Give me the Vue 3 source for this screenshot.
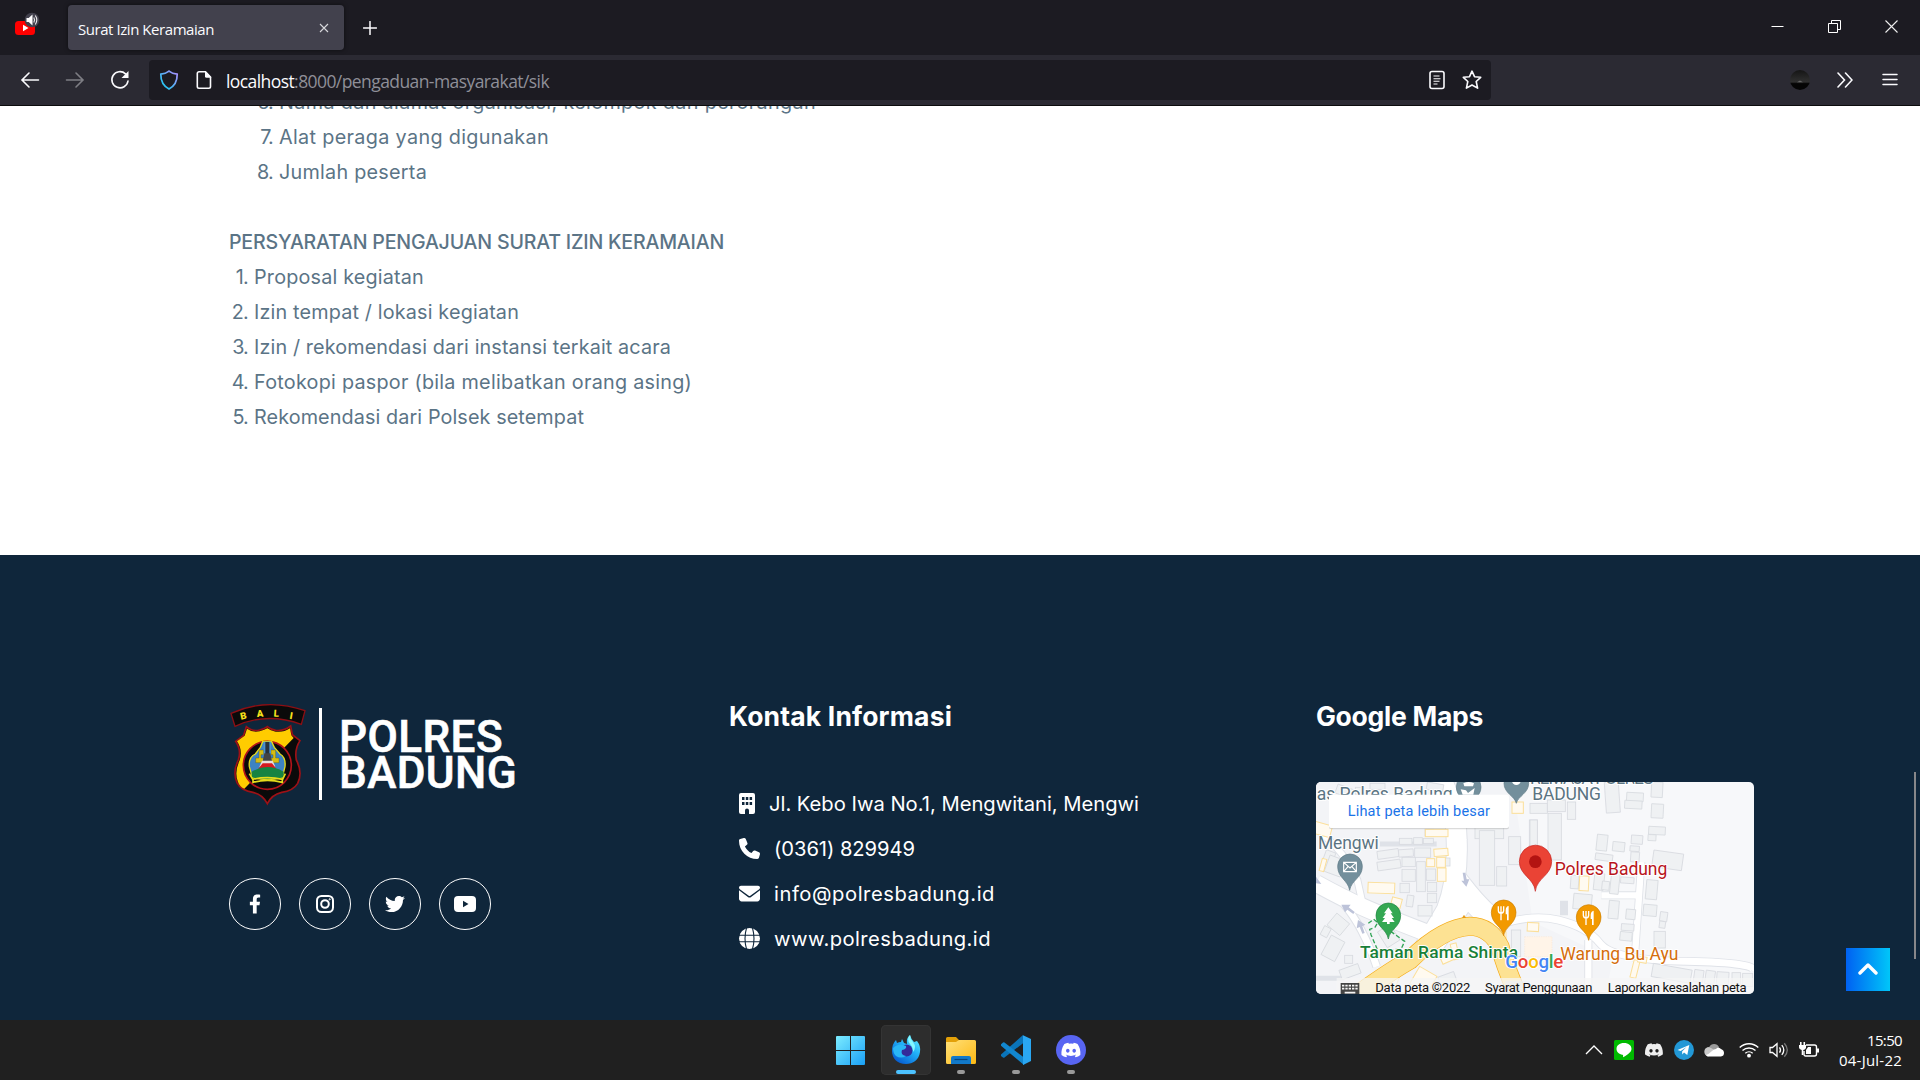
<script setup>
// Spreads the letters of a label evenly so that it takes the given width in pixels.
const vFit = {
  mounted(el, { value }) {
    const natural = el.getBoundingClientRect().width
    const count = el.textContent.length
    el.style.letterSpacing = (value - natural) / count + 'px'
  }
}

const outerItems = [
  { n: 6, text: 'Nama dan alamat organisasi, kelompok dan perorangan', w: 537 },
  { n: 7, text: 'Alat peraga yang digunakan', w: 270 },
  { n: 8, text: 'Jumlah peserta', w: 148 }
]
const innerItems = [
  { n: 1, text: 'Proposal kegiatan', w: 170 },
  { n: 2, text: 'Izin tempat / lokasi kegiatan', w: 265 },
  { n: 3, text: 'Izin / rekomendasi dari instansi terkait acara', w: 417 },
  { n: 4, text: 'Fotokopi paspor (bila melibatkan orang asing)', w: 438 },
  { n: 5, text: 'Rekomendasi dari Polsek setempat', w: 330 }
]

const discordPath = 'M20.3 4.4A19.8 19.8 0 0 0 15.4 2.9c-.2.4-.5.9-.6 1.3a18.300 18.300 0 0 0-5.500 0c-.2-.4-.4-.9-.6-1.300A19.700 19.700 0 0 0 3.700 4.400C.5 9-.3 13.600.1 18.100a19.900 19.900 0 0 0 6 3c.5-.6.9-1.300 1.200-2a13 13 0 0 1-1.900-.9l.4-.3a14.200 14.200 0 0 0 12.200 0l.4.3c-.6.4-1.200.7-1.900.9.4.7.8 1.400 1.200 2a19.800 19.800 0 0 0 6-3c.5-5.200-.8-9.700-3.500-13.700zM8 15.300c-1.200 0-2.200-1.100-2.200-2.400s1-2.400 2.200-2.400 2.200 1.100 2.200 2.400-1 2.400-2.200 2.400zm8 0c-1.200 0-2.200-1.100-2.200-2.400s1-2.400 2.200-2.400 2.200 1.100 2.200 2.400-1 2.400-2.200 2.400z'

// Map footprints: x, y, width, height, rotation
const buildings = [
  [108, 50, 50, 28, 20], [166, 52, 26, 22, 0], [210, 40, 45, 18, 0], [380, 40, 50, 22, 10],
  [64, 250, 44, 30, -70], [80, 262, 50, 52, 20], [232, 240, 64, 24, -8], [298, 205, 38, 18, 0],
  [341, 203, 26, 20, 0], [370, 205, 30, 16, 0], [375, 178, 26, 20, 0], [296, 238, 44, 22, -4],
  [344, 234, 48, 28, 0], [232, 272, 70, 26, -8], [306, 262, 40, 28, 0], [306, 298, 40, 36, 0],
  [350, 275, 26, 90, 0], [379, 297, 28, 34, 0], [422, 264, 28, 24, 0], [382, 337, 28, 28, 0],
  [382, 370, 28, 28, 0], [300, 340, 28, 28, 0], [320, 376, 20, 34, 8], [354, 406, 42, 32, 0],
  [90, 440, 50, 46, 40], [76, 502, 46, 66, 28], [134, 556, 24, 24, 0], [66, 470, 22, 30, 28],
  [244, 470, 44, 56, -32], [120, 590, 60, 30, -20], [418, 612, 50, 34, -20],
  [525, 150, 86, 56, 0], [538, 182, 46, 164, 0], [590, 290, 30, 58, 0], [626, 200, 36, 84, 0],
  [688, 150, 24, 90, 0], [634, 480, 28, 80, 0], [690, 100, 52, 30, 0], [742, 90, 54, 35, 0],
  [690, 150, 22, 100, 0], [744, 130, 40, 140, 0], [802, 96, 25, 52, 0], [916, 36, 42, 92, -4],
  [980, 68, 50, 26, 3], [974, 92, 52, 24, 3], [1054, 36, 34, 46, 3], [1054, 102, 36, 42, 3],
  [1046, 170, 50, 24, 3], [1044, 194, 24, 18, 3], [890, 194, 32, 48, 6], [938, 216, 36, 28, 6],
  [994, 196, 34, 26, 4], [990, 228, 28, 16, 4], [886, 252, 52, 20, 8], [992, 246, 26, 30, 4],
  [1058, 246, 90, 50, 8], [812, 316, 24, 40, 4], [882, 310, 30, 50, 6], [932, 300, 26, 72, 6],
  [906, 334, 22, 26, 6], [962, 322, 40, 18, 4], [1038, 330, 34, 58, 5], [820, 372, 55, 46, 5],
  [926, 392, 30, 54, 5], [978, 418, 28, 30, 5], [1030, 404, 40, 34, 5], [1080, 426, 22, 28, 8],
  [1078, 454, 18, 20, 8], [964, 462, 38, 20, 4], [960, 486, 36, 26, 6], [1062, 484, 34, 50, 0],
  [1056, 590, 118, 40, 10], [1182, 600, 28, 36, 8], [1216, 602, 28, 40, 8], [1250, 606, 36, 40, 4],
  [1296, 608, 26, 40, 0], [1328, 610, 30, 40, 0]
]
const shops = [
  [36, 160, 58, 36, 15], [62, 266, 14, 38, 15], [376, 178, 68, 22, 0], [402, 236, 42, 22, -4],
  [380, 266, 24, 24, 0], [410, 262, 26, 30, 0], [412, 294, 26, 40, 0], [204, 338, 80, 32, 2],
  [274, 384, 30, 28, 15], [636, 96, 34, 34, 0], [420, 540, 50, 34, -24], [456, 520, 18, 48, -14],
  [340, 600, 60, 60, 30], [245, 600, 50, 50, 20], [586, 486, 32, 36, 0], [682, 458, 34, 26, 3],
  [838, 318, 28, 44, 3], [996, 570, 18, 54, 14], [1014, 560, 26, 18, 10]
]
</script>

<template>
  <div class="screen">
    <header class="tabs">
      <div class="pinned">
        <svg width="26" height="26" viewBox="0 0 26 26">
          <rect x="1" y="9" width="20" height="14" rx="3.500" fill="#f00" />
          <path d="M9 12.800v6.400l5.500-3.200z" fill="#fff" />
          <circle cx="18" cy="8" r="7.300" fill="#42414d" />
          <path d="M12.500 6v4h2.200l3.800 3.500v-11L14.700 6z" fill="#fff" />
          <path d="M19.800 5.500q1.500 2.500 0 5M21.300 3.500q3 4.500 0 9" fill="none" stroke="#eee" stroke-width="1.100" />
        </svg>
      </div>
      <div class="tab">
        <span v-fit="136">Surat Izin Keramaian</span>
        <svg width="10" height="10" viewBox="0 0 10 10"><path d="M1 1l8 8M9 1l-8 8" stroke="#d8d8dc" stroke-width="1.100" /></svg>
      </div>
      <svg class="plus" width="14" height="14" viewBox="0 0 14 14"><path d="M7 .5v13M.5 7h13" stroke="#fbfbfe" stroke-width="1.500" stroke-linecap="round" /></svg>
      <div class="controls">
        <svg width="13" height="13" viewBox="0 0 13 13"><path d="M.5 6.500h12" stroke="#fff" /></svg>
        <svg width="13" height="13" viewBox="0 0 13 13"><path d="M.5 3.500h9v9h-9zM3.500 3.500v-3h9v9h-3" fill="none" stroke="#fff" /></svg>
        <svg width="13" height="13" viewBox="0 0 13 13"><path d="M.5.5l12 12M12.500.5l-12 12" stroke="#eee" stroke-width="1.100" /></svg>
      </div>
    </header>

    <nav class="toolbar">
      <div class="nav">
        <svg width="20" height="20" viewBox="0 0 20 20"><path d="M18.500 10H2M9 3l-7 7 7 7" class="line" /></svg>
        <svg class="dim" width="20" height="20" viewBox="0 0 20 20"><path d="M1.500 10H18M11 3l7 7-7 7" class="line" /></svg>
        <svg width="20" height="20" viewBox="0 0 20 20"><path d="M15.500 3.800A8.100 8.100 0 1 0 18 11" class="line" /><path d="M18.500 1v7h-7z" fill="#fbfbfe" /></svg>
      </div>
      <div class="url">
        <svg width="20" height="20" viewBox="0 0 20 20">
          <defs><linearGradient id="sh" x1="0" y1="1" x2="1" y2="0"><stop offset=".2" stop-color="#2ac3f2" /><stop offset="1" stop-color="#b18cff" /></linearGradient></defs>
          <path d="M10 1.200c2.200 1.800 5 2.700 8.200 3 .1 6-1.800 11.300-8.200 14.800C3.600 15.500 1.700 10.200 1.800 4.200c3.200-.3 6-1.200 8.200-3z" fill="none" stroke="url(#sh)" stroke-width="1.700" />
        </svg>
        <svg class="page-icon" width="16" height="20" viewBox="0 0 16 20"><path d="M3 1.800h6.500L14.500 7v9.500a1.700 1.700 0 0 1-1.700 1.700H3a1.700 1.700 0 0 1-1.700-1.700v-13A1.700 1.700 0 0 1 3 1.800z" fill="none" stroke="#fbfbfe" stroke-width="1.600" /><path d="M9 1l6.500 6.800H10.500A1.500 1.500 0 0 1 9 6.300z" fill="#fbfbfe" /></svg>
        <span class="address" v-fit="323"><b>localhost</b>:8000/pengaduan-masyarakat/sik</span>
        <svg class="reader" width="16" height="20" viewBox="0 0 16 20"><rect x="1" y="1.500" width="14" height="17" rx="2" class="line" /><path d="M4.500 6h6M4.500 8.700h7M4.500 11.300h6M4.500 14h4" stroke="#fbfbfe" stroke-width="1.100" /></svg>
        <svg class="star" width="20" height="20" viewBox="0 0 20 20"><path d="M10 1.200l2.500 5.500 6.200.6-4.500 4.200 1.400 6.600-5.600-3.100-5.600 3.100 1.400-6.600L1.300 7.300l6.200-.6z" class="line" stroke-linejoin="round" /></svg>
      </div>
      <div class="tools">
        <svg width="20" height="20" viewBox="0 0 20 20">
          <defs><linearGradient id="pf" x1="0" y1="0" x2="0" y2="1"><stop offset="0" stop-color="#151515" /><stop offset=".6" stop-color="#303030" /><stop offset=".68" stop-color="#050505" /></linearGradient></defs>
          <circle cx="10" cy="10" r="10" fill="url(#pf)" /><path d="M7 12.300l3-1.700 3 1.700z" fill="#666" />
        </svg>
        <svg width="16" height="16" viewBox="0 0 16 16"><path d="M1 1l6.500 7L1 15M8.500 1L15 8l-6.500 7" class="line" /></svg>
        <svg width="16" height="16" viewBox="0 0 16 16"><path d="M1 2.500h14M1 7.500h14M1 12.500h14" class="line thin" /></svg>
      </div>
    </nav>

    <main class="page">
      <section class="article">
        <ol class="outer">
          <li v-for="i in outerItems" :key="i.n"><i>{{ i.n }}.</i><span v-fit="i.w">{{ i.text }}</span></li>
        </ol>
        <h2><span v-fit="495">PERSYARATAN PENGAJUAN SURAT IZIN KERAMAIAN</span></h2>
        <ol class="inner">
          <li v-for="i in innerItems" :key="i.n"><i>{{ i.n }}.</i><span v-fit="i.w">{{ i.text }}</span></li>
        </ol>
      </section>

      <footer class="footer">
        <div class="brand">
          <div class="logo">
            <svg class="badge" width="90" height="110" viewBox="0 0 270 330">
              <path id="ribbon" d="M18 40Q125-8 240 32L229 73Q125 35 30 79z" fill="#0a0a0a" stroke="#8c0f14" stroke-width="4" />
              <g class="bali" text-anchor="middle">
                <text transform="translate(57 57) rotate(-12)">B</text><text transform="translate(106 50) rotate(-4)">A</text>
                <text transform="translate(153 50) rotate(4)">L</text><text transform="translate(197 57) rotate(10)">I</text>
              </g>
              <path d="M64 80Q82 96 104 90Q120 86 127 80Q136 88 152 91Q176 94 197 78L202 104L225 122Q208 148 214 180Q234 218 218 250Q205 272 170 277Q140 284 127 311Q114 284 84 277Q48 272 36 248Q22 216 40 180Q50 150 32 124L56 106z" fill="#0a0a0a" stroke="#9d1116" stroke-width="5" />
              <path d="M66 86Q84 99 104 94Q120 90 127 85Q136 92 152 95Q176 98 195 85L199 106L206 114L58 266Q45 262 39 246Q27 216 44 181Q54 150 36 124L59 107z" fill="#fc0" />
              <circle cx="127" cy="196" r="72" fill="#0a0a0a" stroke="#b3141a" stroke-width="5" />
              <path d="M91 162l15-20 7-17h27l8 17 17 20q18 10 15 38l-8 32q-45 14-90 0l-9-32q-3-28 18-38z" fill="#3d83c3" stroke="#e5dc1c" stroke-width="4" />
              <path d="M102 150h14v14h-8v10h10v14H92v-14h10zM138 150h14v24h10v14h-26v-14h8v-10h-6z" fill="#d6bd13" stroke="#504b0a" />
              <path d="M116 125h22v50h-22z" fill="#4b93d1" /><path d="M121 126h12v50h-12z" fill="#29333c" />
              <path d="M118 160h18l5 24h-28z" fill="#444" /><path d="M111 182h32l8 18h-48z" fill="#e8dedd" />
              <path d="M113 190h28l14 18H99z" fill="#d71920" />
              <path d="M80 215q47-28 96 0v17q-46 12-96 0z" fill="#168342" />
              <path d="M73 221l10 17q44-10 90 0l8-17M84 235v12q43-12 88 0v-12" fill="none" stroke="#e5dc1c" stroke-width="5" />
            </svg>
            <span class="divider"></span>
            <div class="name"><span v-fit="164">POLRES</span><span v-fit="178">BADUNG</span></div>
          </div>
          <div class="social">
            <a><svg width="12" height="20" viewBox="0 0 320 512"><path fill="#fff" d="M279.140 288l14.220-92.660h-88.910v-60.130c0-25.350 12.420-50.060 52.240-50.060h40.420V6.260S260.430 0 225.360 0c-73.220 0-121.080 44.380-121.080 124.720v70.620H22.890V288h81.390v224h100.170V288z" /></svg></a>
            <a><svg width="20" height="20" viewBox="0 0 20 20" fill="none" stroke="#fff" stroke-width="2"><rect x="2" y="2" width="16" height="16" rx="4.500" /><circle cx="10" cy="10" r="3.800" /><circle cx="14.700" cy="5.300" r=".6" stroke-width="1" /></svg></a>
            <a><svg width="20" height="20" viewBox="0 0 512 512"><path fill="#fff" d="M459.370 151.716c.325 4.548.325 9.097.325 13.645 0 138.720-105.583 298.558-298.558 298.558-59.452 0-114.680-17.219-161.137-47.106 8.447.974 16.568 1.299 25.340 1.299 49.055 0 94.213-16.568 130.274-44.832-46.132-.975-84.792-31.188-98.112-72.772 6.498.974 12.995 1.624 19.818 1.624 9.421 0 18.843-1.300 27.614-3.573-48.081-9.747-84.143-51.980-84.143-102.985v-1.299c13.969 7.797 30.214 12.670 47.431 13.319-28.264-18.843-46.781-51.005-46.781-87.391 0-19.492 5.197-37.360 14.294-52.954 51.655 63.675 129.300 105.258 216.365 109.807-1.624-7.797-2.599-15.918-2.599-24.040 0-57.828 46.782-104.934 104.934-104.934 30.213 0 57.502 12.670 76.670 33.137 23.715-4.548 46.456-13.320 66.599-25.340-7.798 24.366-24.366 44.833-46.132 57.827 21.117-2.273 41.584-8.122 60.426-16.243-14.292 20.791-32.161 39.308-52.628 54.253z" /></svg></a>
            <a><svg width="22" height="16" viewBox="0 0 22 16"><rect width="22" height="16" rx="4" fill="#fff" /><path d="M9 4.800v6.400L14.500 8z" fill="#0f263b" /></svg></a>
          </div>
        </div>

        <div class="contact">
          <h3><span v-fit="223">Kontak Informasi</span></h3>
          <ul>
            <li class="addr"><svg width="16" height="21" viewBox="0 0 16 21"><path fill="#fff" fill-rule="evenodd" d="M2 0h12a2 2 0 0 1 2 2v17a2 2 0 0 1-2 2h-4v-3.500a2 2 0 0 0-4 0V21H2a2 2 0 0 1-2-2V2a2 2 0 0 1 2-2zM3 4v3h2.500V4zM6.800 4v3h2.500V4zM10.600 4v3h2.500V4zM3 9v3h2.500V9zM6.800 9v3h2.500V9zM10.600 9v3h2.500V9z" /></svg><span v-fit="370">Jl. Kebo Iwa No.1, Mengwitani, Mengwi</span></li>
            <li><svg width="21" height="21" viewBox="0 0 512 512"><path fill="#fff" d="M164.900 24.600c-7.700-18.600-28-28.500-47.400-23.200l-88 24C12.100 30.200 0 46 0 64c0 247.400 200.600 448 448 448 18 0 33.800-12.100 38.600-29.500l24-88c5.300-19.400-4.600-39.700-23.200-47.400l-96-40c-16.300-6.800-35.200-2.100-46.300 11.600L304.700 368C234.300 334.700 177.300 277.700 144 207.300l49.300-40.300c13.700-11.200 18.400-30 11.600-46.300l-40-96z" /></svg><span v-fit="141">(0361) 829949</span></li>
            <li><svg width="21" height="21" viewBox="0 0 512 512"><path fill="#fff" d="M48 64C21.500 64 0 85.500 0 112c0 15.100 7.100 29.300 19.200 38.400L236.800 313.600c11.400 8.500 27 8.500 38.400 0L492.800 150.400c12.100-9.100 19.200-23.300 19.200-38.400 0-26.500-21.500-48-48-48H48zM0 176V384c0 35.300 28.700 64 64 64H448c35.300 0 64-28.700 64-64V176L294.400 339.200c-22.800 17.100-54 17.100-76.800 0L0 176z" /></svg><span v-fit="221">info@polresbadung.id</span></li>
            <li><svg width="21" height="21" viewBox="0 0 21 21"><circle cx="10.500" cy="10.500" r="10.500" fill="#fff" /><path d="M0 7.300h21M0 13.700h21M7.500 0q-3 10.500 0 21M13.500 0q3 10.500 0 21" fill="none" stroke="#0f263b" stroke-width="1.100" /></svg><span v-fit="217">www.polresbadung.id</span></li>
          </ul>
        </div>

        <div class="maps">
          <h3><span v-fit="167">Google Maps</span></h3>
          <svg class="map" width="438" height="212" viewBox="48 36 1314 636">
            <rect x="48" y="36" width="1314" height="636" fill="#f7f8fa" />
            <path d="M48 36h590l60 420 240 110-20 106H48z" fill="#f3f4f7" />
            <g class="roads">
              <path d="M420 24Q470 110 470 210Q475 330 440 420L370 540" stroke-width="66" />
              <path d="M400 520Q470 420 500 370Q540 420 600 470" stroke-width="72" />
              <path d="M48 340Q130 385 190 412T410 500" stroke-width="56" />
              <path d="M48 175Q140 250 172 330L192 420" stroke-width="24" />
              <path d="M130 400Q190 470 230 590" stroke-width="26" />
              <path d="M580 470Q690 430 775 450T900 520T1160 574T1362 606" stroke-width="26" />
              <path d="M865 510V672M904 376H1020M1024 276L1006 540M792 436V392" stroke-width="24" />
              <path d="M48 625h85M240 222h170" stroke-width="15" />
            </g>
            <g class="roads core">
              <path d="M420 24Q470 110 470 210Q475 330 440 420L370 540" stroke-width="60" />
              <path d="M400 520Q470 420 500 370Q540 420 600 470" stroke-width="66" />
              <path d="M48 340Q130 385 190 412T410 500" stroke-width="50" />
              <path d="M48 175Q140 250 172 330L192 420" stroke-width="18" />
              <path d="M130 400Q190 470 230 590" stroke-width="20" />
              <path d="M580 470Q690 430 775 450T900 520T1160 574T1362 606" stroke-width="21" />
              <path d="M865 510V672M904 376H1020M1024 276L1006 540" stroke-width="19" />
            </g>
            <g fill="#eff1f3" stroke="#d7dadf" stroke-width="2.500">
              <rect v-for="(b, i) in buildings" :key="i" :x="b[0]" :y="b[1]" :width="b[2]" :height="b[3]" :transform="`rotate(${b[4]} ${b[0] + b[2] / 2} ${b[1] + b[3] / 2})`" />
            </g>
            <g fill="#fffaf0" stroke="#fbdf9a" stroke-width="3">
              <rect v-for="(b, i) in shops" :key="i" :x="b[0]" :y="b[1]" :width="b[2]" :height="b[3]" :transform="`rotate(${b[4]} ${b[0] + b[2] / 2} ${b[1] + b[3] / 2})`" />
            </g>
            <path d="M674 500h82v60h-82z" fill="#fff4e8" stroke="#fbdfc0" stroke-dasharray="4 3" />
            <path d="M150 690Q260 610 330 570Q430 472 510 469Q570 470 600 530Q615 590 660 690" fill="none" stroke="#f5ad1c" stroke-width="57" />
            <path d="M150 690Q260 610 330 570Q430 472 510 469Q570 470 600 530Q615 590 660 690" fill="none" stroke="#fde293" stroke-width="53" />
            <path d="M486 444l6-10 6 10z" fill="#e89b15" />
            <path d="M205 460l16-12 12 10-8 14-16 6 4 16 18 42 6 24M272 484l42 30-10 22-40 6" fill="none" stroke="#31a457" stroke-width="4" stroke-dasharray="13 7" />
            <g fill="#bdc3d9">
              <path d="M488 308h8l4 20h8l-9 22-15-18h8z" /><path d="M124 404l28 0-6 8 18 14-4 6-18-13-7 8z" />
              <path d="M174 450l22 14-9 5 7 20-7 2-8-20-9 4z" /><path d="M48 320l16 22-16-2z" />
            </g>

            <g class="label slate">
              <text x="50" y="89" textLength="408">as Polres Badung</text>
              <text x="690" y="41" textLength="370">REMAJA POLRES</text>
              <text x="697" y="91" textLength="206">BADUNG</text>
              <text x="54" y="236" textLength="182">Mengwi</text>
            </g>
            <g fill="#738f9c" stroke="#5d7985" stroke-width="2">
              <path d="M506 110C501 88 469 83 469 51a37 37 0 0 1 74 0C543 83 511 88 506 110z" />
              <path d="M649 100C644 78 612 70 612 40a37 37 0 0 1 74 0C686 70 654 78 649 100z" />
              <path d="M149 361C144 330 113 324 113 289a37 37 0 0 1 74 0C187 324 154 330 149 361z" />
            </g>
            <circle cx="649" cy="32" r="13" fill="#fff" />
            <path d="M490 40q16-8 32 0l-3 9h-26zM482 58l16 3 6 8 20-15-4 20h-32z" fill="#fff" />
            <path d="M131 277h38v28h-38zM131 277l19 17 19-17M131 305l13-15M169 305l-13-15" fill="none" stroke="#fff" stroke-width="3.500" />
            <path d="M265 507C260 477 228 471 228 436a37 37 0 0 1 74 0C302 471 270 477 265 507z" fill="#34a853" stroke="#208241" stroke-width="2" />
            <path d="M265 412l13 18h-6l10 14h-7l9 12h-15v6h-8v-6h-15l9-12h-7l10-14h-6z" fill="#fff" />
            <g>
              <path d="M611 497C606 468 574 462 574 427a37 37 0 0 1 74 0C648 462 616 468 611 497z" fill="#f29900" stroke="#cc7e00" stroke-width="2" />
              <path d="M595 409v13q1 8 8 8v21M603 409v20M611 409v13q-1 8-8 8" fill="none" stroke="#fff" stroke-width="4" /><path d="M617 420q1-11 9-12v43h-5v-18h-4z" fill="#fff" />
            </g>
            <g transform="translate(255 14)">
              <path d="M611 497C606 468 574 462 574 427a37 37 0 0 1 74 0C648 462 616 468 611 497z" fill="#f29900" stroke="#cc7e00" stroke-width="2" />
              <path d="M595 409v13q1 8 8 8v21M603 409v20M611 409v13q-1 8-8 8" fill="none" stroke="#fff" stroke-width="4" /><path d="M617 420q1-11 9-12v43h-5v-18h-4z" fill="#fff" />
            </g>
            <path d="M706 364C702 324 658 316 658 274a48.500 48.500 0 0 1 97 0C755 316 710 324 706 364z" fill="#ea4335" stroke="#c5221f" stroke-width="2" />
            <circle cx="706" cy="275" r="19" fill="#b31412" />
            <g class="label">
              <text x="764" y="314" fill="#b8141b" textLength="338">Polres Badung</text>
              <text x="781" y="569" fill="#d56e0c" textLength="354">Warung Bu Ayu</text>
              <text x="180" y="563" fill="#188038" class="strong" textLength="474">Taman Rama Shinta</text>
            </g>
            <path d="M618 632h72v40h-82z" fill="#c9d9f7" opacity=".6" />
            <text class="google" x="616" y="595" textLength="174"><tspan fill="#4285f4">G</tspan><tspan fill="#ea4335">o</tspan><tspan fill="#fbbc04">o</tspan><tspan fill="#4285f4">g</tspan><tspan fill="#34a853">l</tspan><tspan fill="#ea4335">e</tspan></text>
            <path d="M110 624h1252v48H110z" fill="#f5f5f5" opacity=".75" />
            <g transform="translate(122 639)"><path d="M0 0h56v40H0z" fill="#444" /><path d="M4 8h48M4 17h48" stroke="#f5f5f5" stroke-width="5" stroke-dasharray="7 3" /><path d="M12 29h32" stroke="#f5f5f5" stroke-width="5" /></g>
            <g class="terms">
              <text x="226" y="666" textLength="285">Data peta ©2022</text><text x="555" y="666" textLength="322">Syarat Penggunaan</text><text x="923" y="666" textLength="417">Laporkan kesalahan peta</text>
            </g>
            <rect x="87" y="77" width="540" height="101" rx="6" fill="#999" opacity=".35" />
            <rect x="87" y="74" width="540" height="100" rx="6" fill="#fff" />
            <text class="bigger" x="143" y="137" textLength="427">Lihat peta lebih besar</text>
          </svg>
        </div>
      </footer>
      <button class="to-top"><svg width="20" height="13" viewBox="0 0 20 13"><path d="M2 11l8-8 8 8" fill="none" stroke="#fff" stroke-width="3.400" stroke-linecap="round" stroke-linejoin="round" /></svg></button>
      <span class="scrollbar"></span>
    </main>

    <div class="taskbar">
      <div class="apps">
        <div class="app">
          <svg class="start" width="29" height="29" viewBox="0 0 29 29"><defs><linearGradient id="wn" x1="0" y1="0" x2="1" y2="1"><stop stop-color="#7cecff" /><stop offset="1" stop-color="#1aa0f6" /></linearGradient></defs><path d="M1 0h13v14H0V1a1 1 0 0 1 1-1zM15 0h13a1 1 0 0 1 1 1v13H15zM0 15h14v14H1a1 1 0 0 1-1-1zM15 15h14v13a1 1 0 0 1-1 1H15z" fill="url(#wn)" /></svg>
        </div>
        <div class="app active">
          <svg width="30" height="30" viewBox="0 0 30 30">
            <defs><linearGradient id="fx" x1="1" y1="0" x2=".3" y2="1"><stop stop-color="#6ff7ff" /><stop offset=".5" stop-color="#20aff8" /><stop offset="1" stop-color="#075ed1" /></linearGradient></defs>
            <path d="M15 29C6 29 1 23 1 16Q1 9 5 5L6 8Q8 7 10 7L11 4L13 8L16 9Q15 3 19 0Q20 4 23 7L26 6Q30 11 29 17C28 25 22 29 15 29z" fill="url(#fx)" />
            <circle cx="15.500" cy="15.500" r="6" fill="#342a9a" /><path d="M2 13Q8 7 15 11Q16 14 11 15Q9 20 15 21Q10 24 5 21Q2 18 2 13z" fill="#29b6f5" /><path d="M19 0Q15 4 19 9Q22 12 22 17Q26 12 22 7Q19 4 19 0z" fill="#85f7ff" />
          </svg>
        </div>
        <div class="app open">
          <svg width="30" height="27" viewBox="0 0 30 27"><defs><linearGradient id="fd" x1="0" y1="0" x2="1" y2="1"><stop stop-color="#ffe07a" /><stop offset="1" stop-color="#fdb913" /></linearGradient></defs><path d="M0 1.500A1.500 1.500 0 0 1 1.500 0H10l3 3v3H0z" fill="#e3a008" /><path d="M0 5h10l3-2h15.500A1.500 1.500 0 0 1 30 4.500v21a1.500 1.500 0 0 1-1.500 1.500h-27A1.500 1.500 0 0 1 0 25.500z" fill="url(#fd)" /><path d="M5 27v-6a2 2 0 0 1 2-2h16a2 2 0 0 1 2 2v6z" fill="#1279c9" /><path d="M8.500 22.500h13" stroke="#07457e" stroke-width="1.200" /></svg>
        </div>
        <div class="app open">
          <svg width="30" height="30" viewBox="0 0 30 30"><path d="M22 0L0 19.500q-.6.800 0 1.400l2 1.600q.8.400 1.500 0L23 7.500z" fill="#0a74b9" /><path d="M0 9.300l2-1.700q.8-.5 1.500 0L23 22.500V30L0 10.700q-.5-.7 0-1.400z" fill="#1287cf" /><path d="M22 .2L30 4v22l-8 4z" fill="#2aa7f2" /></svg>
        </div>
        <div class="app open">
          <svg width="30" height="30" viewBox="0 0 30 30"><circle cx="15" cy="15" r="15" fill="#5865f2" /><path :d="discordPath" fill="#fff" transform="translate(5.400 5.400) scale(.8)" /></svg>
        </div>
      </div>
      <div class="tray">
        <svg width="18" height="10" viewBox="0 0 18 10"><path d="M1 9l8-8 8 8" fill="none" stroke="#fff" stroke-width="1.300" /></svg>
        <svg width="20" height="20" viewBox="0 0 20 20"><rect width="20" height="20" rx="1.500" fill="#00b900" /><path d="M10 3C5.500 3 2.500 5.500 2.500 9c0 3 2.500 5.200 6 5.800.7.200.8.700.5 2.400 2.500-1.200 8.500-4.600 8.500-8.200C17.500 5.500 14.500 3 10 3z" fill="#fff" /></svg>
        <svg width="18" height="18" viewBox="0 0 24 24"><path :d="discordPath" fill="#eee" /></svg>
        <svg width="20" height="20" viewBox="0 0 20 20"><circle cx="10" cy="10" r="10" fill="#2298d6" /><path d="M3.500 10L15.300 5l-2 10-3.300-2.400-1.700 1.800-.2-3L12.500 7l-5.800 4z" fill="#fff" /></svg>
        <svg width="20" height="14" viewBox="0 0 20 14"><path d="M5 13a4.500 4.500 0 0 1 .2-9A5.500 5.500 0 0 1 15 4l-7 9z" fill="#9a9a9a" /><path d="M1 6q3-3 6-1l7 4-10 4.500Q-1 12 1 6z" fill="#c9c9c9" /><path d="M2 12q3-1 6-4 2-2 4-2 2-3 5 0 3 1 3 4t-3 3.500H5q-2 0-3-1.500z" fill="#fff" /></svg>
        <svg class="wifi" width="20" height="16" viewBox="0 0 20 16"><path d="M.7 5.500a13.500 13.500 0 0 1 18.600 0M3.500 8.500a9.500 9.500 0 0 1 13 0M6.300 11.300a5.500 5.500 0 0 1 7.400 0" fill="none" stroke="#fff" stroke-width="1.400" /><circle cx="10" cy="13.700" r="1.900" fill="#fff" /></svg>
        <svg width="20" height="16" viewBox="0 0 20 16" fill="none" stroke="#fff" stroke-width="1.300"><path d="M1 5.500v5h2.500L8 14.300V1.700L3.500 5.500z" /><path d="M10.500 5.300q2 2.700 0 5.400M12.800 3.200q4 4.800 0 9.600" /><path d="M15.300 1.200q6 6.800 0 13.600" stroke="#777" /></svg>
        <svg width="20" height="16" viewBox="0 0 20 16"><path d="M7 3h8.500A2 2 0 0 1 17.500 5v7a2 2 0 0 1-2 2H6.500a1.500 1.500 0 0 1-1.500-1.500V9" fill="none" stroke="#fff" stroke-width="1.400" /><path d="M18 6.500h2v4h-2zM0 3h7v3q-1 2-2.700 2v5H2.700V8Q0 7 0 5.500zM1 0h1.600v3H1zM4.500 0h1.600v3H4.500zM7 8l2-3h3v7H7z" fill="#fff" /></svg>
        <div class="clock"><span v-fit="35">15:50</span><span v-fit="63">04-Jul-22</span></div>
      </div>
    </div>
  </div>
</template>

<style>
body { margin: 0; background: #fff; overflow: hidden; }
</style>

<style scoped>
.screen { width: 1920px; height: 1080px; display: flex; flex-direction: column; overflow: hidden; font-family: "Open Sans", "Noto Sans", sans-serif; }
svg { display: block; flex: none; }
.line { fill: none; stroke: #fbfbfe; stroke-width: 1.6; stroke-linecap: round; }
.thin { stroke-width: 1.5; }

.tabs { height: 55px; flex: none; display: flex; align-items: flex-start; background: #1c1b22; }
.pinned { width: 54px; padding: 12px 0 0 14px; box-sizing: border-box; }
.tab { width: 276px; height: 45px; margin: 5px 0 0 14px; padding: 0 15px 0 10px; box-sizing: border-box; display: flex; align-items: center; justify-content: space-between; background: #42414d; border-radius: 4px; color: #fbfbfe; font-size: 15px; white-space: nowrap; box-shadow: 0 0 4px #0008; }
.tab span { padding-top: 2px; }
.plus { margin: 21px 0 0 19px; }
.controls { margin-left: auto; display: flex; gap: 44px; padding: 20px 22px 0 0; }

.toolbar { height: 51px; flex: none; box-sizing: border-box; display: flex; align-items: center; background: #2b2a33; border-bottom: 1px solid #0c0c0d; }
.nav { width: 149px; box-sizing: border-box; padding-left: 20px; display: flex; gap: 25px; }
.dim { opacity: .4; }
.url { width: 1342px; height: 40px; box-sizing: border-box; padding: 0 9px 0 10px; display: flex; align-items: center; background: #1c1b22; border-radius: 4px; }
.page-icon { margin: 0 14px 0 17px; }
.address { color: #8f8f98; font-size: 17.5px; white-space: nowrap; padding-top: 2px; }
.address b { font-weight: 400; color: #fbfbfe; }
.reader { margin-left: auto; margin-right: 17px; }
.tools { margin-left: auto; padding-right: 22px; display: flex; align-items: center; gap: 29px; }
.tools svg:first-child { margin-right: -2px; }

.page { position: relative; height: 914px; flex: none; overflow: hidden; background: #fff; font-family: Inter, "Open Sans", sans-serif; }
.article { height: 449px; box-sizing: border-box; padding-left: 229px; overflow: hidden; color: #5b7486; font-size: 19.8px; line-height: 35px; }
.article ol, .contact ul { list-style: none; margin: 0; padding: 0; }
.article .outer { margin-top: -21px; padding-left: 25px; }
.article li { display: flex; white-space: nowrap; height: 35px; }
.article i { width: 19px; margin-right: 6px; font-style: normal; text-align: right; letter-spacing: -.8px; }
.article h2 { margin: 35px 0 0; font-size: 19.6px; font-weight: 500; line-height: 35px; white-space: nowrap; }

.footer { height: 465px; box-sizing: border-box; padding: 145px 166px 0 229px; display: flex; background: #0f263b; color: #fff; }
.brand { width: 500px; }
.logo { display: flex; height: 110px; margin-left: -4px; }
.divider { width: 3px; height: 92px; margin: 8px 0 0 4px; background: #fff; }
.name { display: flex; flex-direction: column; align-items: flex-start; margin: 19px 0 0 17px; font: 500 44px/36px Roboto, sans-serif; -webkit-text-stroke: .6px #fff; }
.social { display: flex; gap: 18px; margin-top: 68px; }
.social a { width: 52px; height: 52px; box-sizing: border-box; border: 1px solid #fff; border-radius: 50%; display: flex; align-items: center; justify-content: center; }
.contact { width: 587px; }
h3 { margin: 0; font-size: 26.5px; line-height: 32px; font-weight: 700; white-space: nowrap; }
.contact ul { padding: 49px 0 0 10px; }
.contact li { height: 45px; display: flex; align-items: center; gap: 14px; font-size: 20.2px; white-space: nowrap; }
.map { margin-top: 50px; border-radius: 5px; overflow: hidden; }
.roads path { fill: none; stroke: #dfe2e8; }
.roads.core path { stroke: #fff; }
.label text { font-family: Roboto, sans-serif; font-size: 52.5px; paint-order: stroke; stroke: #fff; stroke-width: 6px; stroke-linejoin: round; }
.slate text { fill: #5b7482; }
.label .strong { font-weight: 500; font-size: 52px; }
.google { font-family: Roboto, sans-serif; font-size: 56px; font-weight: 500; paint-order: stroke; stroke: #fff; stroke-width: 5px; }
.terms text { font: 39px Roboto, sans-serif; fill: #111; }
.bigger { font: 43.5px Roboto, sans-serif; fill: #1a73e8; }
.bali text { font: 900 29px Roboto, sans-serif; fill: #f7e21b; }
.to-top { position: absolute; left: 1846px; top: 842px; width: 44px; height: 43px; padding: 0 0 3px; border: 0; display: flex; align-items: center; justify-content: center; background: linear-gradient(90deg, #0061f2, #00c6f9); }
.scrollbar { position: absolute; left: 1914px; top: 666px; width: 2px; height: 187px; background: #87878a; }

.taskbar { height: 60px; flex: none; display: flex; background: #202020; color: #fff; }
.apps { display: flex; margin-left: 826px; padding-top: 5px; gap: 5px; }
.app { position: relative; width: 50px; height: 50px; display: flex; align-items: center; justify-content: center; }
.start { margin-right: 1px; }
.active { background: #2d2d2d; border-radius: 5px; box-shadow: inset 0 0 0 1px #343434; }
.app.open::after, .app.active::after { content: ""; position: absolute; bottom: 1px; left: 21px; width: 8px; height: 4px; border-radius: 2px; background: #999; }
.app.active::after { left: 15px; width: 20px; background: #4cc2ff; }
.tray { margin-left: auto; padding-right: 18px; display: flex; align-items: center; gap: 10px; }
.tray svg:nth-child(1) { margin-right: 1px; }
.tray svg:nth-child(3) { margin: 0 1px; }
.tray .wifi { margin-left: 5px; }
.clock { width: 73px; display: flex; flex-direction: column; align-items: flex-end; font-size: 15px; line-height: 20px; white-space: nowrap; }
</style>
